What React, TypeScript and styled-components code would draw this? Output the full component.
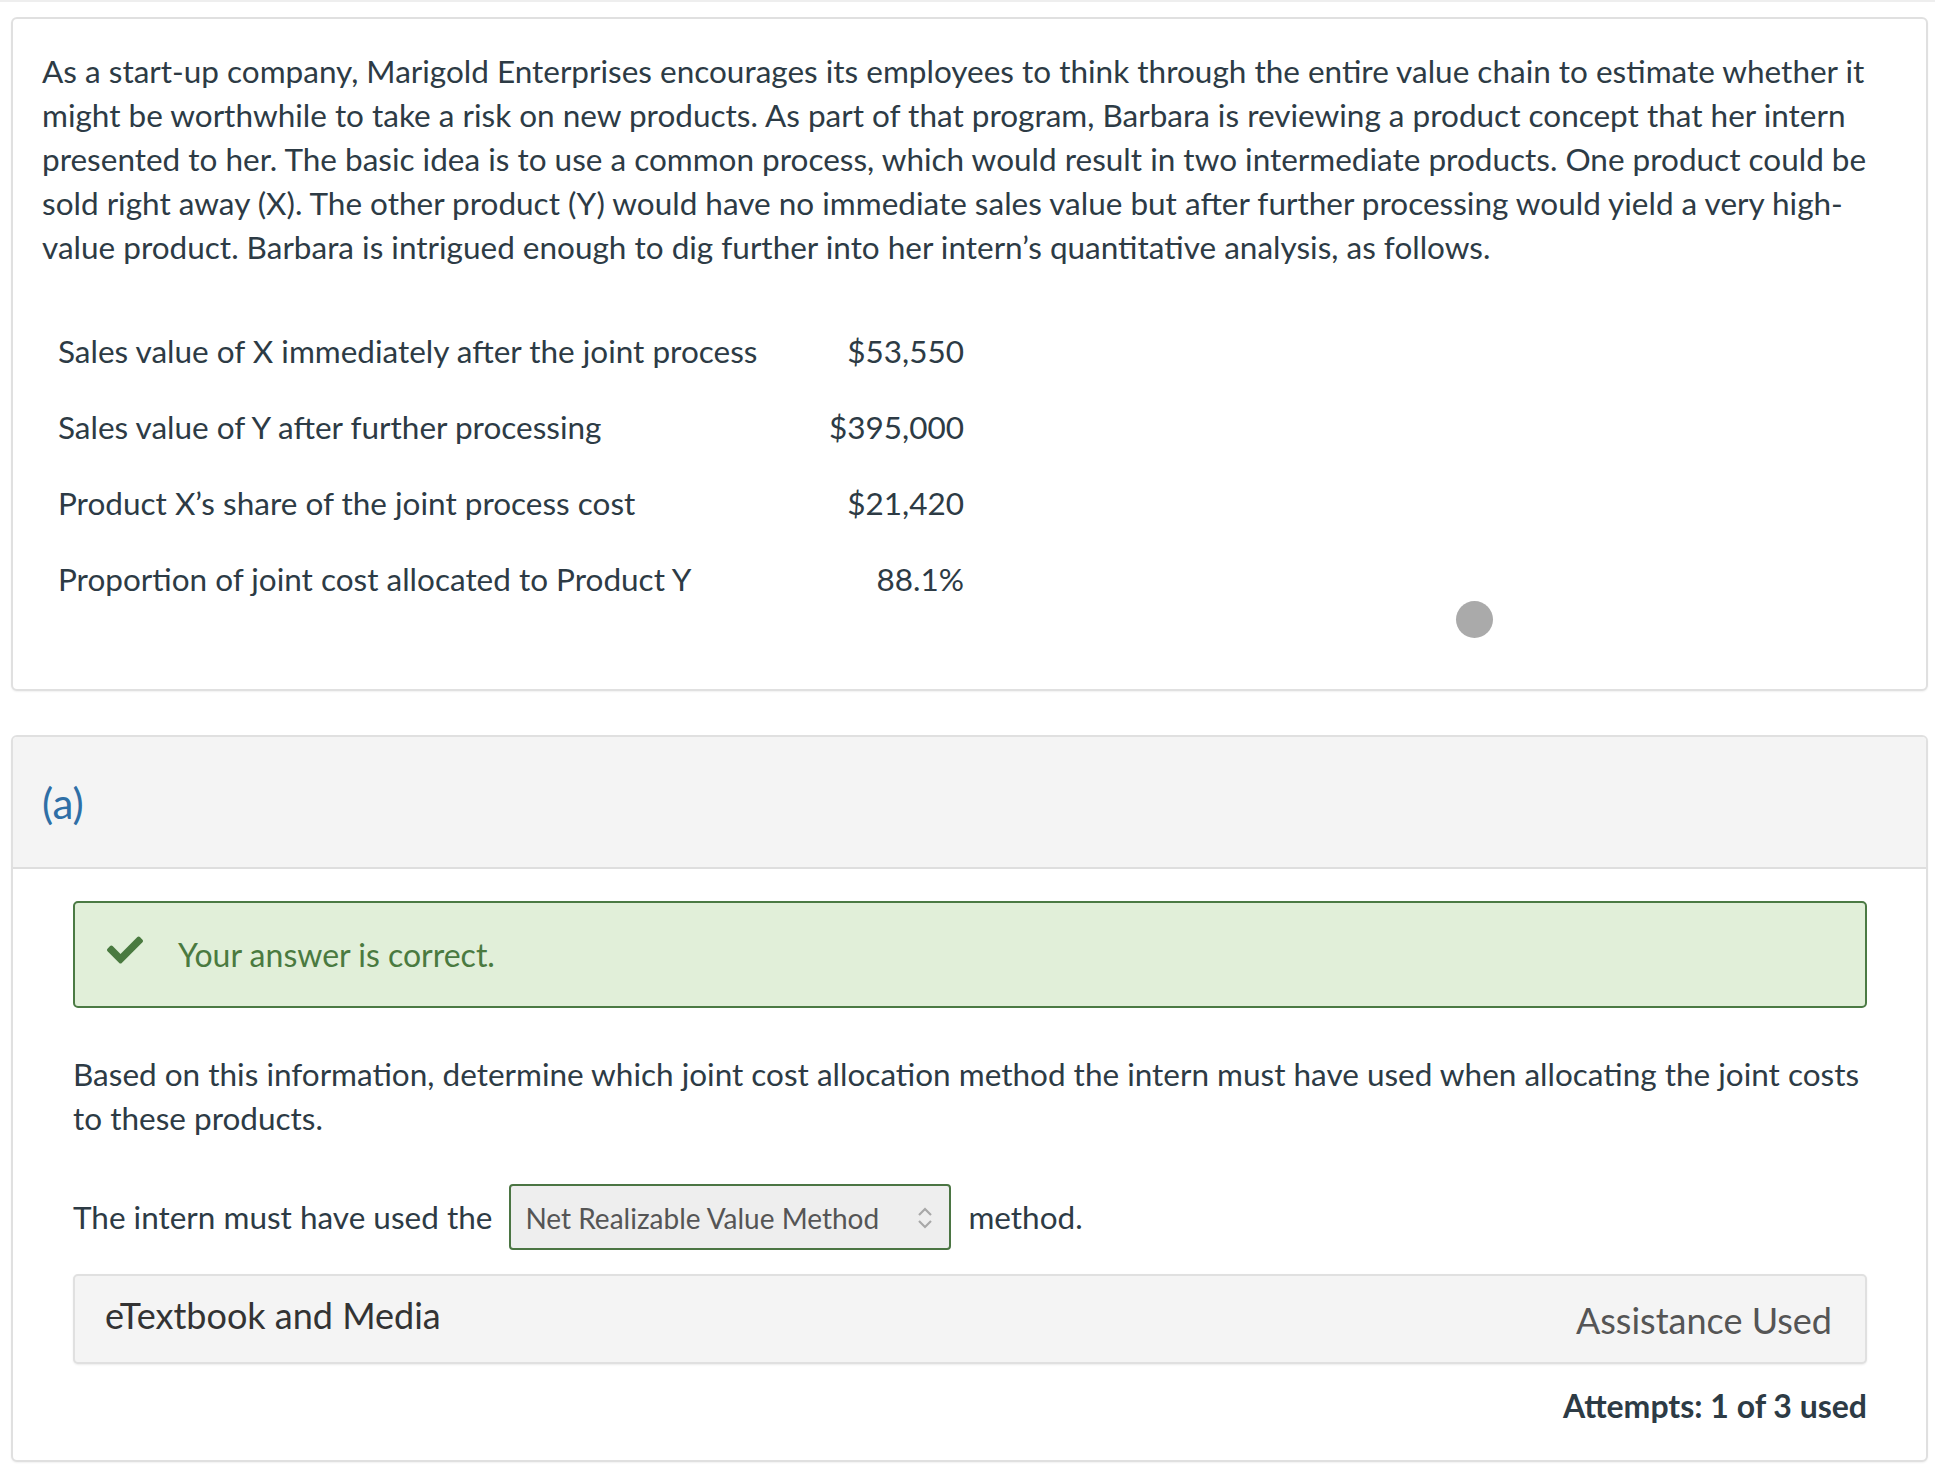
import React from 'react';
import styled, { createGlobalStyle } from 'styled-components';
import { FaCheck } from 'react-icons/fa';

const GlobalStyle = createGlobalStyle`
  body {
    margin: 0;
    background: #ffffff;
    font-family: Lato, 'Open Sans', sans-serif;
    color: #2d3b45;
  }
`;

const Page = styled.div`
  padding: 0 7px 11px 11px;
  border-top: 2px solid #eeeeee;
`;

const Card = styled.section`
  position: relative;
  background: #ffffff;
  border: 2px solid #e0e0e0;
  border-radius: 6px;
  box-shadow: 0 1px 2px rgba(0, 0, 0, 0.06);
`;

const IntroCard = styled(Card)`
  margin-top: 15px;
  height: 674px;
  box-sizing: border-box;
  padding: 30px 30px 0 29px;
`;

const Paragraph = styled.p`
  margin: 0;
  font-size: 31.5px;
  line-height: 44px;
`;

const DataTable = styled.div`
  display: grid;
  grid-template-columns: 740px 166px;
  grid-auto-rows: 76px;
  margin: 44px 0 0 16px;
  align-items: center;
  font-size: 31.5px;
  white-space: nowrap;
`;

const Label = styled.div``;

const Value = styled.div`
  text-align: right;
`;

const Dot = styled.span`
  position: absolute;
  left: 1443px;
  top: 582px;
  width: 37px;
  height: 37px;
  border-radius: 50%;
  background: #aaaaaa;
`;

const PartCard = styled(Card)`
  margin-top: 44px;
  overflow: hidden;
`;

const PartHeader = styled.div`
  height: 132px;
  background: #f4f4f4;
  border-bottom: 2px solid #dedede;
  display: flex;
  align-items: center;
  padding-left: 29px;
  padding-top: 2px;
  box-sizing: border-box;
  font-size: 42px;
  color: #2f6fa6;
`;

const PartBody = styled.div`
  padding: 32px 59px 35px 60px;
`;

const Feedback = styled.div`
  height: 107px;
  box-sizing: border-box;
  display: flex;
  align-items: center;
  gap: 35px;
  padding: 0 0 0 32px;
  background: #e1efd9;
  border: 2px solid #4b7a44;
  border-radius: 5px;
  color: #4a7a40;
  font-size: 32px;
  svg {
    margin-top: -10px;
  }
`;

const Question = styled(Paragraph)`
  margin-top: 44px;
`;

const AnswerRow = styled.div`
  display: flex;
  align-items: center;
  gap: 17px;
  margin-top: 44px;
  font-size: 31.5px;
`;

const Select = styled.div`
  width: 442px;
  height: 66px;
  box-sizing: border-box;
  display: flex;
  align-items: center;
  justify-content: space-between;
  padding: 2px 16px 0 14px;
  background: #eeeeee;
  border: 2px solid #4b7543;
  border-radius: 4px;
  color: #555555;
  font-size: 28px;
`;

const MediaBar = styled.div`
  margin-top: 24px;
  height: 90px;
  box-sizing: border-box;
  display: flex;
  align-items: center;
  justify-content: space-between;
  padding: 0 33px 0 30px;
  background: #f4f4f4;
  border: 2px solid #e0e0e0;
  border-radius: 5px;
  box-shadow: 0 1px 2px rgba(0, 0, 0, 0.08);
`;

const MediaTitle = styled.span`
  font-size: 36px;
  color: #333333;
  margin-top: -8px;
`;

const MediaNote = styled.span`
  font-size: 36px;
  color: #555555;
  margin-top: 2px;
`;

const Attempts = styled.div`
  margin-top: 22px;
  text-align: right;
  font-size: 32px;
  font-weight: 700;
  color: #2d3b45;
`;

const UpDown = () => (
  <svg width="16" height="26" viewBox="0 0 16 26" fill="none" stroke="#a8a8a8" strokeWidth="2.2">
    <path d="M2 10 L8 4 L14 10" />
    <path d="M2 16 L8 22 L14 16" />
  </svg>
);

const rows = [
  ['Sales value of X immediately after the joint process', '$53,550'],
  ['Sales value of Y after further processing', '$395,000'],
  ['Product X\u2019s share of the joint process cost', '$21,420'],
  ['Proportion of joint cost allocated to Product Y', '88.1%'],
];

export default function App() {
  return (
    <Page>
      <GlobalStyle />
      <IntroCard>
        <Paragraph>
          As a start-up company, Marigold Enterprises encourages its employees to think through the entire value chain to estimate whether it might be worthwhile to take a risk on new products. As part of that program, Barbara is reviewing a product concept that her intern presented to her. The basic idea is to use a common process, which would result in two intermediate products. One product could be sold right away (X). The other product (Y) would have no immediate sales value but after further processing would yield a very high-value product. Barbara is intrigued enough to dig further into her intern&rsquo;s quantitative analysis, as follows.
        </Paragraph>
        <DataTable>
          {rows.map(([label, value]) => (
            <React.Fragment key={label}>
              <Label>{label}</Label>
              <Value>{value}</Value>
            </React.Fragment>
          ))}
        </DataTable>
        <Dot />
      </IntroCard>

      <PartCard>
        <PartHeader>(a)</PartHeader>
        <PartBody>
          <Feedback>
            <FaCheck size={36} color="#4a7a40" />
            <span>Your answer is correct.</span>
          </Feedback>
          <Question>
            Based on this information, determine which joint cost allocation method the intern must have used when allocating the joint costs to these products.
          </Question>
          <AnswerRow>
            <span>The intern must have used the</span>
            <Select>
              <span>Net Realizable Value Method</span>
              <UpDown />
            </Select>
            <span>method.</span>
          </AnswerRow>
          <MediaBar>
            <MediaTitle>eTextbook and Media</MediaTitle>
            <MediaNote>Assistance Used</MediaNote>
          </MediaBar>
          <Attempts>Attempts: 1 of 3 used</Attempts>
        </PartBody>
      </PartCard>
    </Page>
  );
}
